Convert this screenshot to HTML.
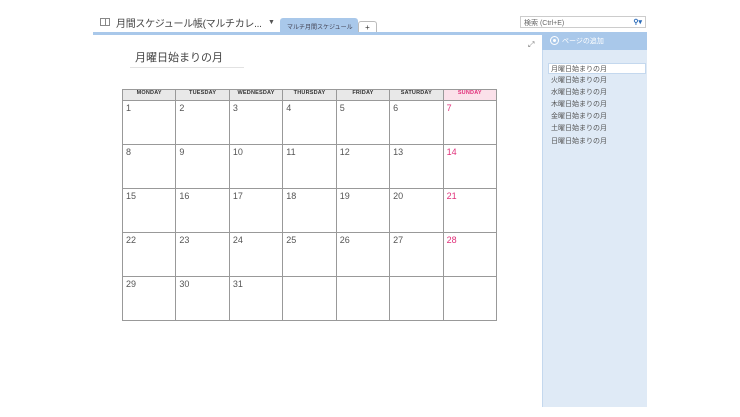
<!DOCTYPE html>
<html><head><meta charset="utf-8"><style>
*{margin:0;padding:0;box-sizing:border-box}
body{width:740px;height:417px;background:#fff;position:relative;overflow:hidden;font-family:"Liberation Sans","Noto Sans CJK JP",sans-serif;color:#333}
.a{position:absolute}
table{position:absolute;left:122px;top:89px;border-collapse:collapse;width:375px}
td,th{border:1.5px solid #999;width:53.5px;vertical-align:top}
th{height:11px;background:#e8e8e8;font-size:5.5px;font-weight:bold;color:#333;letter-spacing:.2px}
th.s{background:#fbe1ea;color:#e0307a}
td{height:44px;font-size:9px;color:#555;padding:2px 3px}
td.s{color:#e0307a}
.pl{font-size:7px;color:#555;position:absolute;left:551px}
</style></head><body>
<div class="a" style="left:100px;top:18px;width:5px;height:8px;border:1px solid #888;border-right:none"></div>
<div class="a" style="left:105px;top:18px;width:5px;height:8px;border:1px solid #888"></div>
<div class="a" style="left:116px;top:15px;font-size:10px;color:#444;white-space:nowrap;letter-spacing:-0.3px">月間スケジュール帳(マルチカレ...</div>
<div class="a" style="left:268px;top:19px;font-size:7px;color:#555">▼</div>
<div class="a" style="left:280px;top:18px;width:78px;height:15px;background:#a9c8ea;border-radius:3px 3px 0 0;font-size:6px;color:#445;padding:4px 0 0 7px">マルチ月間スケジュール</div>
<div class="a" style="left:358px;top:21px;width:19px;height:12px;border:1px solid #bbb;border-bottom:none;border-radius:3px 3px 0 0;font-size:8px;text-align:center;line-height:11px">+</div>
<div class="a" style="left:93px;top:32px;width:450px;height:3px;background:#a9c8ea"></div>
<div class="a" style="left:520px;top:16px;width:126px;height:12px;border:1px solid #ccc;font-size:7px;color:#666;padding:1px 3px">検索 (Ctrl+E)<span style="position:absolute;right:3px;color:#2a6ab8;font-weight:bold">⚲▾</span></div>
<div class="a" style="left:528px;top:40px;font-size:8px;color:#777">⤢</div>
<div class="a" style="left:542px;top:32px;width:105px;height:375px;background:#dfeaf6;border-left:1px solid #c4d8ee"></div>
<div class="a" style="left:542px;top:32px;width:105px;height:18px;background:#a9c8ea"></div>
<div class="a" style="left:550px;top:36px;width:9px;height:9px;border:1px solid #fff;border-radius:50%"><div style="margin:2px;width:3px;height:3px;background:#fff;border-radius:50%"></div></div>
<div class="a" style="left:562px;top:36px;font-size:7px;color:#fff">ページの追加</div>
<div class="a" style="left:548px;top:63px;width:98px;height:11px;background:#fff;border:1px solid #c4d8ee"></div>
<div class="pl" style="top:64px">月曜日始まりの月</div>
<div class="pl" style="top:75px">火曜日始まりの月</div>
<div class="pl" style="top:87px">水曜日始まりの月</div>
<div class="pl" style="top:99px">木曜日始まりの月</div>
<div class="pl" style="top:111px">金曜日始まりの月</div>
<div class="pl" style="top:123px">土曜日始まりの月</div>
<div class="pl" style="top:136px">日曜日始まりの月</div>
<div class="a" style="left:135px;top:49px;font-size:11px;color:#444">月曜日始まりの月</div>
<div class="a" style="left:130px;top:67px;width:114px;height:1px;background:#e2e2e2"></div>
<table>
<tr><th>MONDAY</th><th>TUESDAY</th><th>WEDNESDAY</th><th>THURSDAY</th><th>FRIDAY</th><th>SATURDAY</th><th class="s">SUNDAY</th></tr>
<tr><td>1</td><td>2</td><td>3</td><td>4</td><td>5</td><td>6</td><td class="s">7</td></tr>
<tr><td>8</td><td>9</td><td>10</td><td>11</td><td>12</td><td>13</td><td class="s">14</td></tr>
<tr><td>15</td><td>16</td><td>17</td><td>18</td><td>19</td><td>20</td><td class="s">21</td></tr>
<tr><td>22</td><td>23</td><td>24</td><td>25</td><td>26</td><td>27</td><td class="s">28</td></tr>
<tr><td>29</td><td>30</td><td>31</td><td></td><td></td><td></td><td></td></tr>
</table>
</body></html>
